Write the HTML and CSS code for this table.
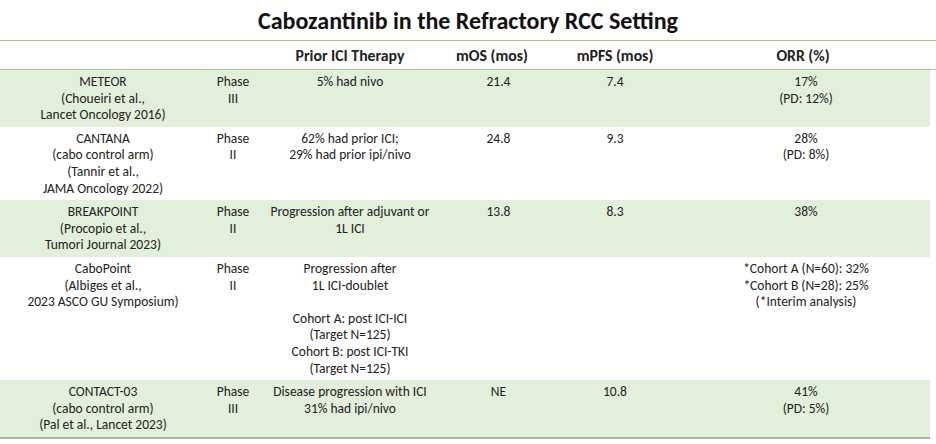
FILE: index.html
```html
<!DOCTYPE html>
<html>
<head>
<meta charset="utf-8">
<link rel="stylesheet" href="styles.css">
</head>
<body>
<h1 class="title">Cabozantinib in the Refractory RCC Setting</h1>
<div class="table">
  <div class="row head">
    <div class="cell"></div>
    <div class="cell"></div>
    <div class="cell">Prior ICI Therapy</div>
    <div class="cell h-mos">mOS (mos)</div>
    <div class="cell">mPFS (mos)</div>
    <div class="cell h-orr">ORR (%)</div>
  </div>
  <div class="row green">
    <div class="cell">METEOR<br>(Choueiri et al.,<br>Lancet Oncology 2016)</div>
    <div class="cell">Phase<br>III</div>
    <div class="cell">5% had nivo</div>
    <div class="cell">21.4</div>
    <div class="cell">7.4</div>
    <div class="cell orr">17%<br>(PD: 12%)</div>
  </div>
  <div class="row">
    <div class="cell">CANTANA<br>(cabo control arm)<br>(Tannir et al.,<br>JAMA Oncology 2022)</div>
    <div class="cell">Phase<br>II</div>
    <div class="cell">62% had prior ICI;<br>29% had prior ipi/nivo</div>
    <div class="cell">24.8</div>
    <div class="cell">9.3</div>
    <div class="cell orr">28%<br>(PD: 8%)</div>
  </div>
  <div class="row green">
    <div class="cell">BREAKPOINT<br>(Procopio et al.,<br>Tumori Journal 2023)</div>
    <div class="cell">Phase<br>II</div>
    <div class="cell">Progression after adjuvant or<br>1L ICI</div>
    <div class="cell">13.8</div>
    <div class="cell">8.3</div>
    <div class="cell orr">38%</div>
  </div>
  <div class="row">
    <div class="cell">CaboPoint<br>(Albiges et al.,<br>2023 ASCO GU Symposium)</div>
    <div class="cell">Phase<br>II</div>
    <div class="cell">Progression after<br>1L ICI-doublet<br><br>Cohort A: post ICI-ICI<br>(Target N=125)<br>Cohort B: post ICI-TKI<br>(Target N=125)</div>
    <div class="cell"></div>
    <div class="cell"></div>
    <div class="cell orr">*Cohort A (N=60): 32%<br>*Cohort B (N=28): 25%<br>(*Interim analysis)</div>
  </div>
  <div class="row green last">
    <div class="cell">CONTACT-03<br>(cabo control arm)<br>(Pal et al., Lancet 2023)</div>
    <div class="cell">Phase<br>III</div>
    <div class="cell">Disease progression with ICI<br>31% had ipi/nivo</div>
    <div class="cell">NE</div>
    <div class="cell">10.8</div>
    <div class="cell orr">41%<br>(PD: 5%)</div>
  </div>
</div>
</body>
</html>
```
FILE: styles.css
```css
html, body {
  margin: 0;
  padding: 0;
  background: #ffffff;
}
body {
  width: 936px;
  font-family: "Carlito", "Lato", "Liberation Sans", sans-serif;
  color: #222222;
}
.title {
  margin: 0;
  height: 40px;
  line-height: 42px;
  font-size: 24px;
  font-weight: 700;
  text-align: center;
  color: #111111;
  box-sizing: border-box;
}
.table {
  border-top: 1px solid #a8c98c;
}
.row {
  display: grid;
  grid-template-columns: 206px 54px 180px 117px 116px 257px;
  width: 930px;
  font-size: 13.5px;
  line-height: 16.6px;
}
.row.head {
  height: 28px;
  border-bottom: 1px solid #a8c98c;
  width: 936px;
  grid-template-columns: 206px 54px 180px 117px 116px 257px 6px;
  font-weight: 700;
  font-size: 15.75px;
  line-height: 18px;
}
.row.head .cell {
  padding-top: 6px;
  padding-bottom: 0;
}
.row.green {
  background: #e2efda;
}
.row.last {
  border-bottom: 2px solid #a3b89d;
}
.cell {
  text-align: center;
  padding: 4px 0 3px;
  white-space: nowrap;
}
.h-mos {
  padding-right: 13px;
}
.h-orr {
  padding-left: 3px;
}
.orr {
  padding-left: 9px;
}
```
